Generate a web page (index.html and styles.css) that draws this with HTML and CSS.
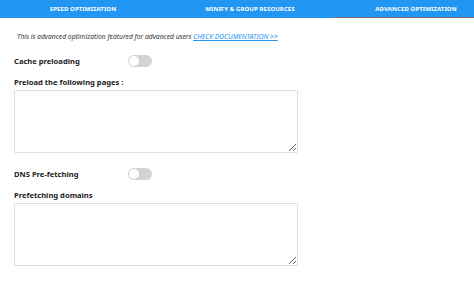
FILE: index.html
```html
<!DOCTYPE html>
<html>
  <head>
    <title>Advanced Optimization</title>
    <meta name="viewport" content="width=device-width, initial-scale=1" />
    <link rel="stylesheet" href="styles.css">
  </head>
  <body>
    <div class="tabs">
      <div class="tab tab-speed">Speed Optimization</div>
      <div class="tab tab-minify">Minify &amp; Group Resources</div>
      <div class="tab tab-advanced active">Advanced Optimization</div>
    </div>

    <div class="panel">
      <p class="intro">
        This is advanced optimization featured for advanced users
        <a href="#">CHECK DOCUMENTATION &gt;&gt;</a>
      </p>

      <div class="switch-row first">
        <label>Cache preloading</label>
        <span class="toggle"></span>
      </div>

      <div class="field">
        <label for="preload">Preload the following pages :</label>
        <textarea id="preload"></textarea>
      </div>

      <div class="switch-row">
        <label>DNS Pre-fetching</label>
        <span class="toggle"></span>
      </div>

      <div class="field">
        <label for="domains">Prefetching domains</label>
        <textarea id="domains"></textarea>
      </div>
    </div>
  </body>
</html>
```

FILE: styles.css
```css
/* Page */
body {
  margin: 0;
  background: #fff;
  font-family: "Noto Sans", "Open Sans", sans-serif;
  color: #222;
}

/* Tabs */
.tabs {
  display: grid;
  grid-template-columns: 166px 168px 1fr;
  height: 18px;
  background-color: #2196f3;
}

.tab {
  display: flex;
  align-items: center;
  justify-content: center;
  color: #fff;
  font-size: 6px;
  font-weight: 700;
  text-transform: uppercase;
  letter-spacing: 0.1px;
}

.tab-advanced {
  padding-left: 24px;
}

.tab.active {
  border-bottom: 1px solid #7d6468;
  box-sizing: border-box;
  padding-top: 1px;
}

/* Content */
.panel {
  padding: 0 14px;
}

.intro {
  margin: 14px 0 0 3px;
  font-size: 6.75px;
  font-style: italic;
  color: #333;
}

.intro a {
  color: #2196f3;
}

.switch-row {
  display: flex;
  align-items: center;
  margin-top: 15px;
  height: 12px;
}

.switch-row.first {
  margin-top: 14px;
}

.switch-row label {
  width: 114px;
  font-size: 7.6px;
  font-weight: 700;
  line-height: 12px;
}

.toggle {
  position: relative;
  width: 24px;
  height: 12px;
  border-radius: 6px;
  background: #d3d3d3;
}

.toggle::after {
  content: "";
  position: absolute;
  left: 1px;
  top: 1px;
  width: 10px;
  height: 10px;
  border-radius: 50%;
  background: #fff;
}

.field {
  margin-top: 10px;
}

.field label {
  display: block;
  font-size: 7.6px;
  font-weight: 700;
  line-height: 10px;
  margin-bottom: 3px;
}

.field textarea {
  display: block;
  box-sizing: border-box;
  width: 284px;
  height: 63px;
  margin: 0;
  border: 1px solid #ddd;
  border-radius: 1px;
  resize: vertical;
}
```
